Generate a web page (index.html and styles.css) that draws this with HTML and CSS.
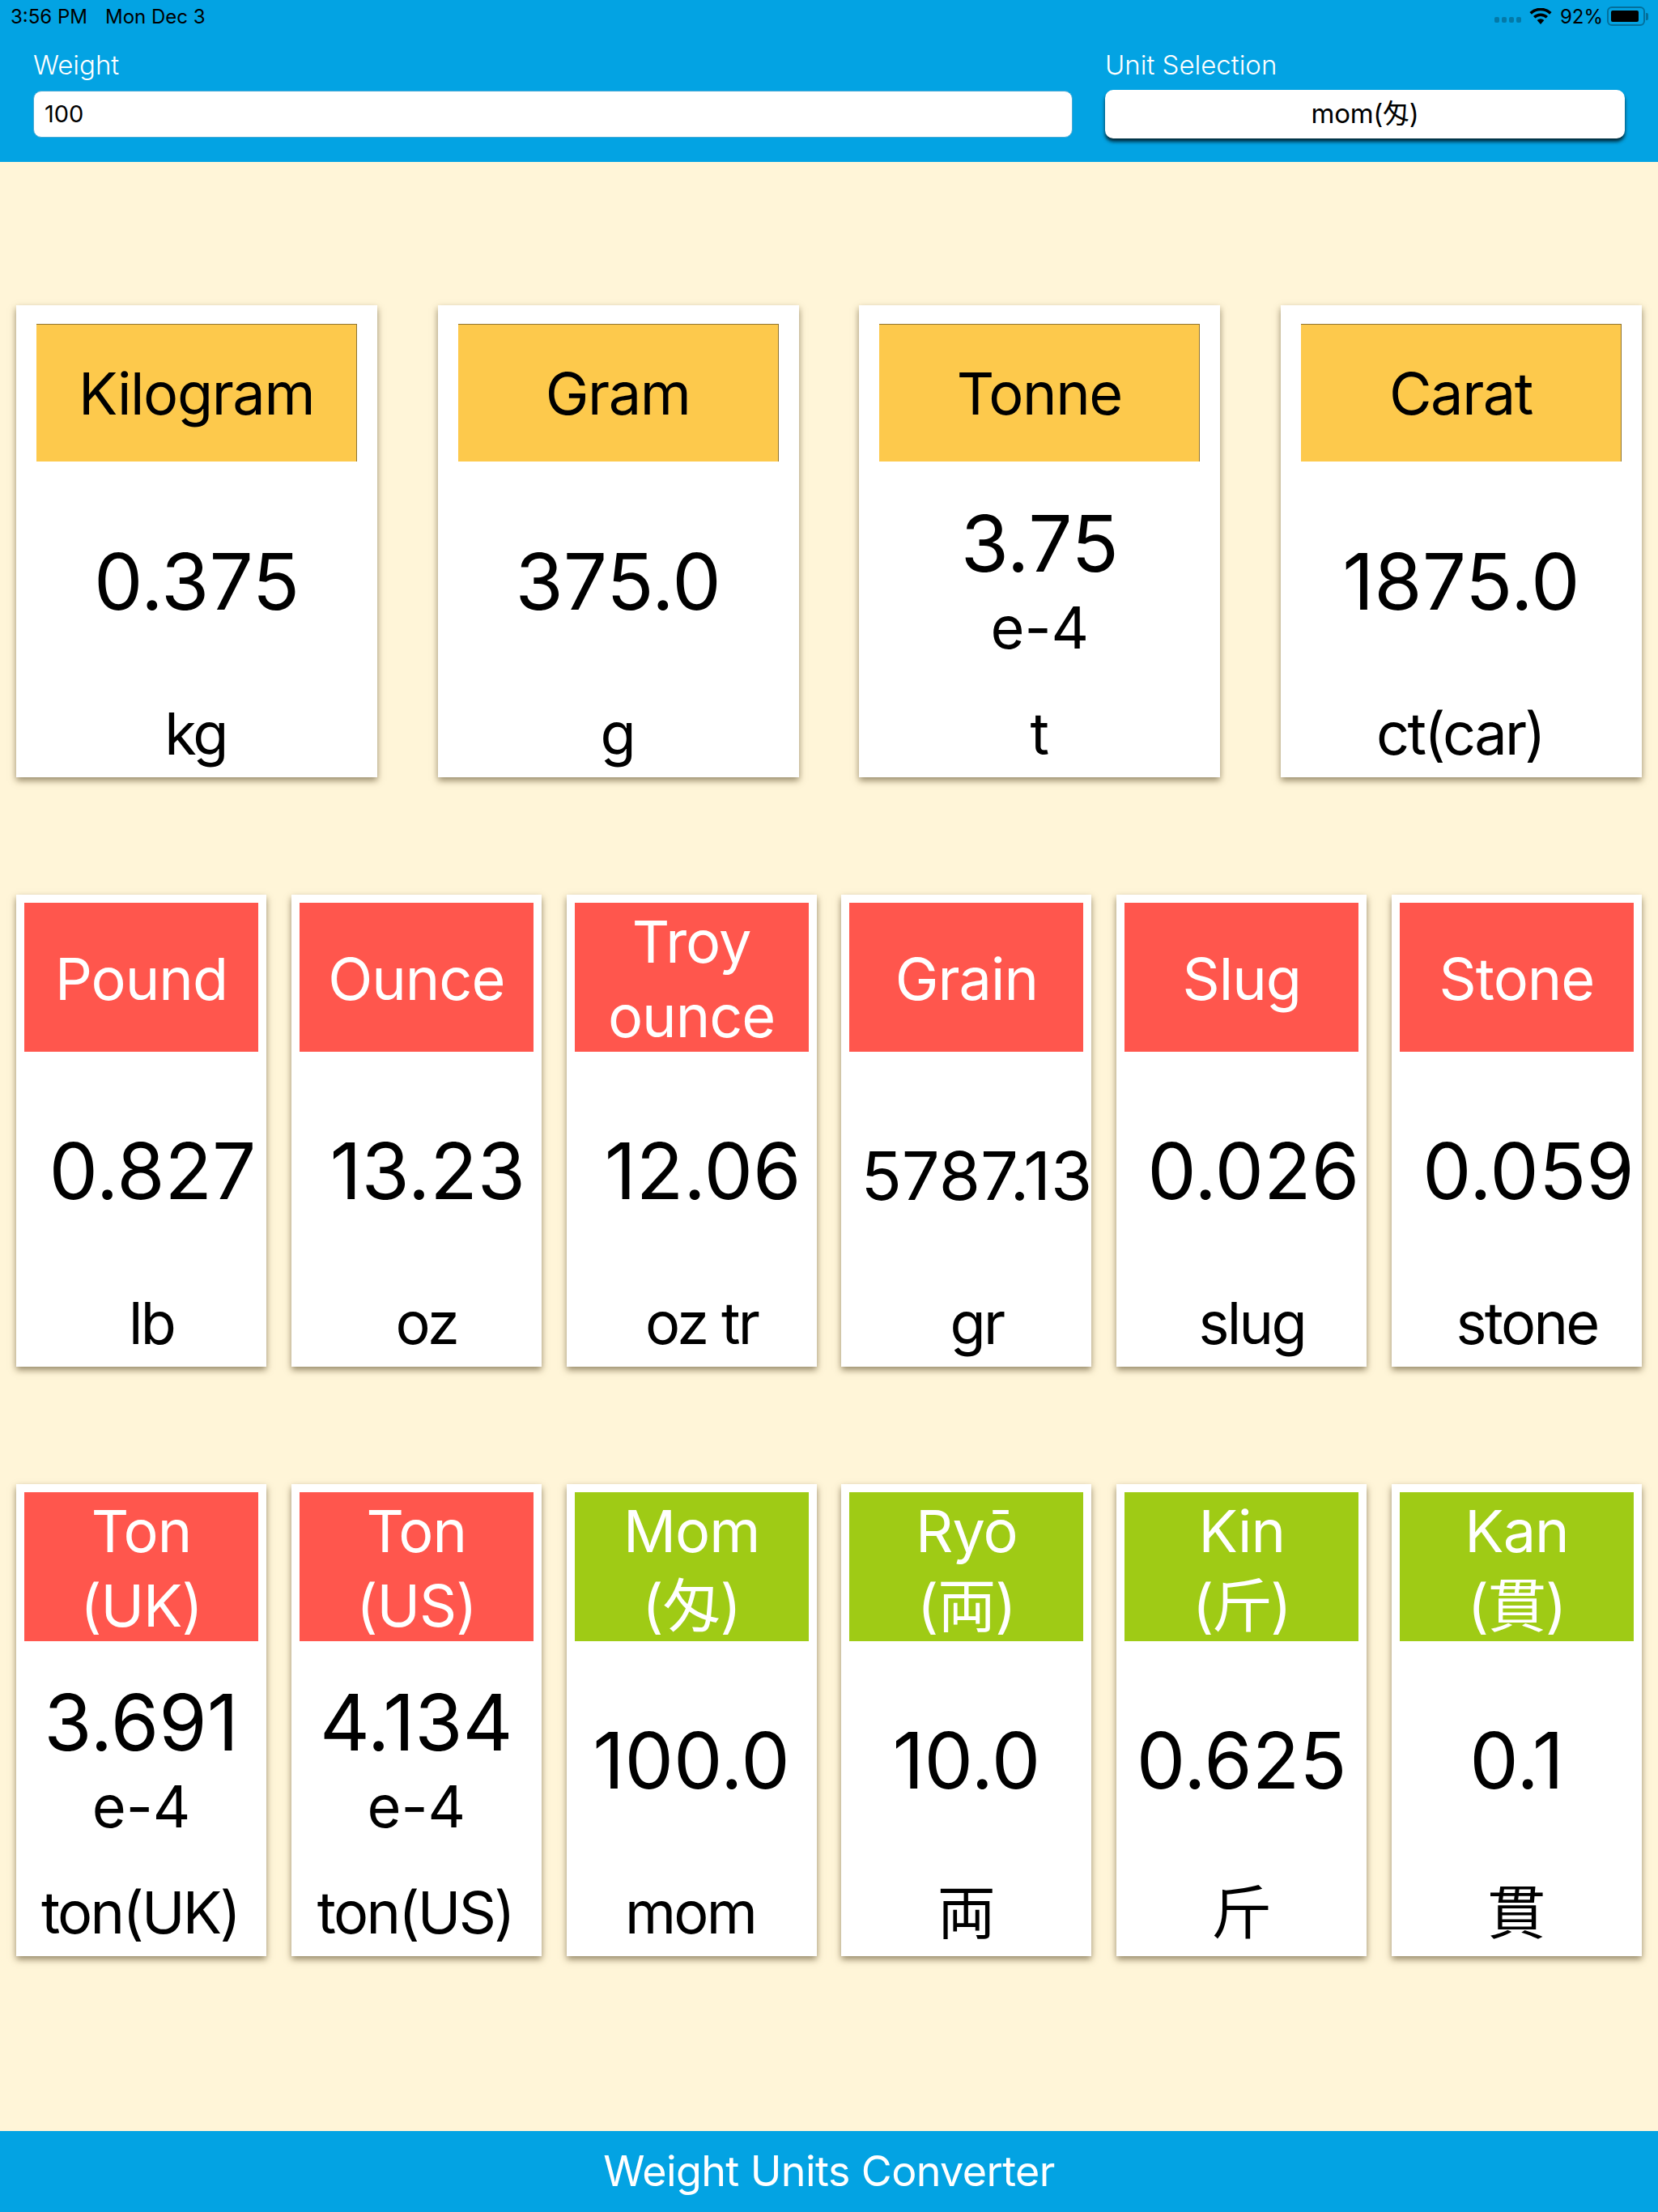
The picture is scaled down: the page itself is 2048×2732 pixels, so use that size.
FILE: index.html
```html
<!DOCTYPE html>
<html>
<head>
<meta name="viewport" content="width=device-width, initial-scale=1">
<title>Weight Units Converter</title>
<link rel="stylesheet" href="styles.css">
</head>
<body>

<header class="top">
	<div class="status">
		<div class="status-left"><span>3:56 PM</span><span>Mon Dec 3</span></div>
		<div class="status-right">
			<div class="signal"><i></i><i></i><i></i><i></i></div>
			<svg class="wifi" viewBox="0 0 28 20" width="28" height="20">
				<path d="M14 20 L9.6 15 A6.6 6.6 0 0 1 18.4 15 Z"/>
				<path d="M7.4 12.6 L5 10 A13 13 0 0 1 23 10 L20.6 12.6 A9.6 9.6 0 0 0 7.4 12.6 Z"/>
				<path d="M2.9 7.7 L0.4 5 A20 20 0 0 1 27.6 5 L25.1 7.7 A16.4 16.4 0 0 0 2.9 7.7 Z"/>
			</svg>
			<span>92%</span>
			<div class="battery"><div class="battery-fill"></div></div>
			<div class="battery-cap"></div>
		</div>
	</div>
	<div class="form">
		<div class="field field-weight">
			<label>Weight</label>
			<div class="input">100</div>
		</div>
		<div class="field field-unit">
			<label>Unit Selection</label>
			<div class="select">mom(匁)</div>
		</div>
	</div>
</header>

<main class="rows">
	<section class="row row-4">
		<div class="card">
			<div class="head head-yellow">Kilogram</div>
			<div class="value">0.375</div>
			<div class="unit">kg</div>
		</div>
		<div class="card">
			<div class="head head-yellow">Gram</div>
			<div class="value">375.0</div>
			<div class="unit">g</div>
		</div>
		<div class="card">
			<div class="head head-yellow">Tonne</div>
			<div class="value value-exp">3.75<span class="exp">e-4</span></div>
			<div class="unit">t</div>
		</div>
		<div class="card">
			<div class="head head-yellow">Carat</div>
			<div class="value">1875.0</div>
			<div class="unit">ct(car)</div>
		</div>
	</section>

	<section class="row row-6">
		<div class="card">
			<div class="head head-red">Pound</div>
			<div class="value shift">0.827</div>
			<div class="unit shift">lb</div>
		</div>
		<div class="card">
			<div class="head head-red">Ounce</div>
			<div class="value shift">13.23</div>
			<div class="unit shift">oz</div>
		</div>
		<div class="card">
			<div class="head head-red">Troy<br>ounce</div>
			<div class="value shift">12.06</div>
			<div class="unit shift">oz tr</div>
		</div>
		<div class="card">
			<div class="head head-red">Grain</div>
			<div class="value value-small">5787.13</div>
			<div class="unit shift">gr</div>
		</div>
		<div class="card">
			<div class="head head-red">Slug</div>
			<div class="value shift">0.026</div>
			<div class="unit shift">slug</div>
		</div>
		<div class="card">
			<div class="head head-red">Stone</div>
			<div class="value shift">0.059</div>
			<div class="unit shift">stone</div>
		</div>
	</section>

	<section class="row row-6">
		<div class="card">
			<div class="head head-red">Ton<br>(UK)</div>
			<div class="value value-exp">3.691<span class="exp">e-4</span></div>
			<div class="unit">ton(UK)</div>
		</div>
		<div class="card">
			<div class="head head-red">Ton<br>(US)</div>
			<div class="value value-exp">4.134<span class="exp">e-4</span></div>
			<div class="unit">ton(US)</div>
		</div>
		<div class="card">
			<div class="head head-green">Mom<br>(匁)</div>
			<div class="value">100.0</div>
			<div class="unit">mom</div>
		</div>
		<div class="card">
			<div class="head head-green">Ryō<br>(両)</div>
			<div class="value">10.0</div>
			<div class="unit">両</div>
		</div>
		<div class="card">
			<div class="head head-green">Kin<br>(斤)</div>
			<div class="value">0.625</div>
			<div class="unit">斤</div>
		</div>
		<div class="card">
			<div class="head head-green">Kan<br>(貫)</div>
			<div class="value">0.1</div>
			<div class="unit">貫</div>
		</div>
	</section>
</main>

<footer class="bottom">Weight Units Converter</footer>

</body>
</html>
```

FILE: styles.css
```css
* {
	box-sizing: border-box;
}

body {
	margin: 0;
	height: 2732px;
	display: flex;
	flex-direction: column;
	background-color: #fff5d8;
	font-family: Inter, "Noto Sans CJK JP", sans-serif;
	color: #000;
}

/* top bar */
.top {
	height: 200px;
	background-color: #03a3e3;
}

.status {
	height: 40px;
	padding: 0 12px 0 13px;
	display: flex;
	justify-content: space-between;
	align-items: center;
	font-size: 24px;
}

.status-left {
	display: flex;
	gap: 22px;
}

.status-right {
	display: flex;
	align-items: center;
}

.signal {
	display: flex;
	gap: 3px;
	margin-right: 10px;
	margin-top: 9px;
}

.signal i {
	width: 6px;
	height: 7px;
	border-radius: 2px;
	background-color: #0379a8;
}

.wifi {
	margin-right: 10px;
}

.battery {
	width: 47px;
	height: 24px;
	margin-left: 5px;
	padding: 3px;
	border: 2px solid #046f9b;
	border-radius: 6px;
}

.battery-fill {
	width: 92%;
	height: 100%;
	border-radius: 2px;
	background-color: #000;
}

.battery-cap {
	width: 3px;
	height: 9px;
	margin-left: 1px;
	border-radius: 0 2px 2px 0;
	background-color: #046f9b;
}

.form {
	display: flex;
	padding: 0 41px;
	gap: 40px;
}

.field label {
	display: block;
	height: 72px;
	padding-top: 18px;
	color: #fff;
	font-size: 33px;
	line-height: 44px;
	font-weight: 300;
}

.field-weight {
	width: 1284px;
}

.field-unit {
	width: 642px;
}

.input {
	height: 58px;
	padding-left: 13px;
	background-color: #fff;
	border: 1px solid #4aa9d4;
	border-radius: 10px;
	font-size: 29px;
	line-height: 56px;
}

.select {
	height: 60px;
	margin-top: -1px;
	background-color: #fff;
	border-radius: 10px;
	box-shadow: 0 4px 4px rgba(0, 0, 0, 0.75);
	font-size: 33px;
	line-height: 58px;
	letter-spacing: -0.3px;
	text-align: center;
}

/* cards */
.rows {
	flex: 1;
	padding: 177px 20px 0;
	display: flex;
	flex-direction: column;
	gap: 145px;
}

.row {
	display: flex;
	justify-content: space-between;
}

.card {
	height: 583px;
	display: flex;
	flex-direction: column;
	background-color: #fff;
	box-shadow: 0 4px 8px rgba(80, 65, 30, 0.6);
	text-align: center;
}

.row-4 .card {
	width: 446px;
	padding: 23px 25px 13px;
}

.row-6 .card {
	width: 309px;
	padding: 10px 10px 13px;
}

.head {
	display: flex;
	align-items: center;
	justify-content: center;
	font-size: 72px;
	line-height: 92px;
	font-weight: 400;
}

.row-4 .head {
	height: 170px;
	letter-spacing: -1.4px;
}

.row-6 .head {
	height: 184px;
	padding-top: 4px;
	letter-spacing: -1px;
}

.head-yellow {
	background-color: #fdc94c;
	border-top: 1px solid #8f7430;
	border-right: 1px solid #8f7430;
}

.head-red {
	background-color: #ff564d;
	color: #fff;
}

.head-green {
	background-color: #9fcb15;
	color: #fff;
}

.value {
	flex: 1;
	display: flex;
	flex-direction: column;
	justify-content: center;
	font-size: 96px;
	line-height: 104px;
	white-space: nowrap;
}

.value-exp {
	padding-top: 10px;
}

.value-small {
	padding-top: 12px;
	padding-left: 14px;
	font-size: 83px;
}

.exp {
	font-size: 72px;
}

.unit {
	height: 82px;
	padding-right: 3px;
	font-size: 72px;
	line-height: 82px;
	letter-spacing: -2.7px;
	white-space: nowrap;
}

.shift {
	padding-left: 28px;
}

/* bottom bar */
.bottom {
	height: 100px;
	background-color: #03a3e3;
	color: #fff;
	font-size: 52px;
	font-weight: 400;
	line-height: 100px;
	letter-spacing: -0.6px;
	text-align: center;
}
```
